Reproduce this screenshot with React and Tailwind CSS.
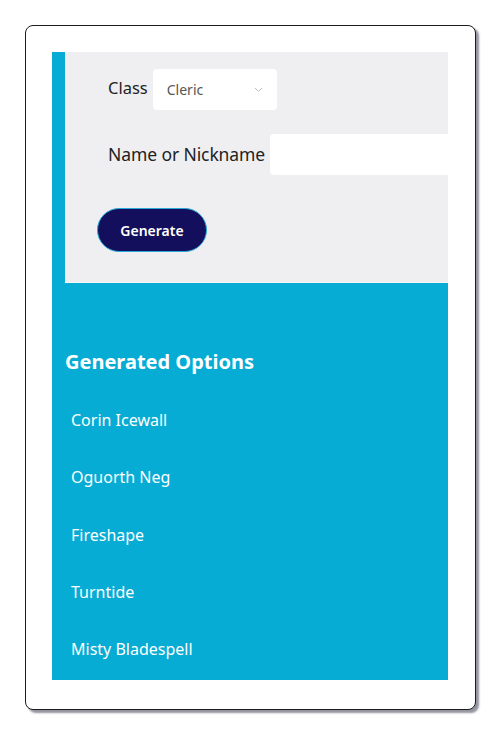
const names = ["Corin Icewall", "Oguorth Neg", "Fireshape", "Turntide", "Misty Bladespell"];

export default function App() {
  return (
    <div className="min-h-[733px] bg-white px-[25px] pt-[25px]" style={{ fontFamily: '"Noto Sans", sans-serif' }}>
      <div className="w-[451px] h-[685px] rounded-[8px] border-[1.5px] border-[#1c1c1c] bg-white shadow-[3px_3px_2px_rgba(60,60,80,0.55)] pl-[26px] pt-[26px]">
        <div className="w-[396px] h-[628px] flex flex-col overflow-hidden">
          <div className="flex h-[231px] shrink-0 bg-[#06acd4]">
            <div className="w-[13px] shrink-0" />
            <div className="flex-1 bg-[#efeff1] border-b border-[#f8f8f8] pl-[43px] pt-[17px] overflow-hidden">
              <div className="flex items-center gap-[5px]">
                <span className="text-[16.5px] text-[#222] -mt-[3px]">Class</span>
                <div className="flex items-center justify-between w-[124px] h-[41px] rounded-[4px] bg-white pl-[14px] pr-[14px]">
                  <span className="text-[14px] text-[#555]">Cleric</span>
                  <svg width="9" height="6" viewBox="0 0 9 6" fill="none">
                    <path d="M1 1l3.5 3.5L8 1" stroke="#bbb" strokeWidth="1" />
                  </svg>
                </div>
              </div>
              <div className="flex items-center gap-[5px] mt-[24px]">
                <span className="text-[17.5px] text-[#222] whitespace-nowrap tracking-[-0.1px]">Name or Nickname</span>
                <div className="w-[260px] h-[41px] shrink-0 rounded-[4px] bg-white" />
              </div>
              <button className="mt-[33px] -ml-[11px] w-[110px] h-[44px] rounded-full bg-[#130f5c] border-[1.5px] border-[#2aa7d6] text-white text-[14px] font-semibold">
                Generate
              </button>
            </div>
          </div>
          <div className="flex-1 bg-[#06acd4] pl-[13px] pt-[65px]">
            <h2 className="text-white text-[20px] font-bold leading-[28px]">Generated Options</h2>
            <ul className="mt-[32px] pl-[6px]">
              {names.map((n) => (
                <li key={n} className="text-white text-[16px] h-[57.3px] leading-[24px]">
                  {n}
                </li>
              ))}
            </ul>
          </div>
        </div>
      </div>
    </div>
  );
}
